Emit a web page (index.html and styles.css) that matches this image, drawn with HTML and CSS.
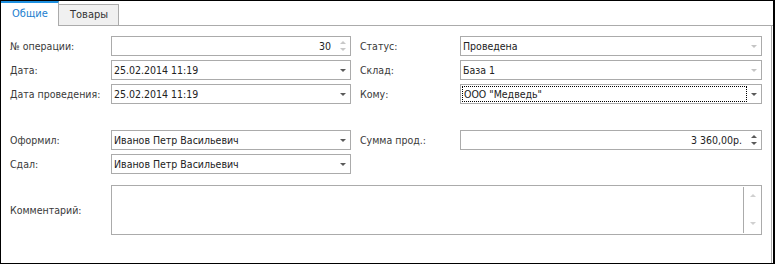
FILE: index.html
```html
<!DOCTYPE html>
<html lang="ru">
<head>
  <meta charset="UTF-8" />
  <title>Операция</title>
  <link rel="stylesheet" href="styles.css">
</head>
<body>

<div class="window">
  <div class="tabs">
    <div class="tab active">Общие</div>
    <div class="tab">Товары</div>
    <div class="tab-fill"></div>
  </div>

  <div class="panel">
    <div class="form-grid">
      <label class="lbl">№ операции:</label>
      <div class="field num">
        <span class="val">30</span>
        <span class="spin light"><i class="up"></i><i class="down"></i></span>
      </div>
      <span></span>
      <label class="lbl">Статус:</label>
      <div class="field">
        <span class="val">Проведена</span>
        <span class="drop light"><i></i></span>
      </div>

      <label class="lbl">Дата:</label>
      <div class="field">
        <span class="val">25.02.2014 11:19</span>
        <span class="drop"><i></i></span>
      </div>
      <span></span>
      <label class="lbl">Склад:</label>
      <div class="field">
        <span class="val">База 1</span>
        <span class="drop light"><i></i></span>
      </div>

      <label class="lbl">Дата проведения:</label>
      <div class="field">
        <span class="val">25.02.2014 11:19</span>
        <span class="drop"><i></i></span>
      </div>
      <span></span>
      <label class="lbl">Кому:</label>
      <div class="field focused">
        <span class="val">ООО "Медведь"</span>
        <span class="drop"><i></i></span>
      </div>
    </div>

    <div class="form-grid second">
      <label class="lbl">Оформил:</label>
      <div class="field">
        <span class="val">Иванов Петр Васильевич</span>
        <span class="drop"><i></i></span>
      </div>
      <span></span>
      <label class="lbl">Сумма прод.:</label>
      <div class="field num">
        <span class="val">3 360,00р.</span>
        <span class="spin"><i class="up"></i><i class="down"></i></span>
      </div>

      <label class="lbl">Сдал:</label>
      <div class="field">
        <span class="val">Иванов Петр Васильевич</span>
        <span class="drop"><i></i></span>
      </div>
    </div>

    <div class="form-grid comment-row">
      <label class="lbl">Комментарий:</label>
      <div class="memo">
        <div class="memo-text"></div>
        <div class="memo-scroll">
          <i class="up"></i>
          <i class="down"></i>
        </div>
      </div>
    </div>
  </div>
</div>

</body>
</html>
```

FILE: styles.css
```css
* {
  margin: 0;
  padding: 0;
  box-sizing: border-box;
}

body {
  font-family: "DejaVu Sans Condensed", "DejaVu Sans", Verdana, sans-serif;
  font-stretch: semi-condensed;
  font-size: 10.5px;
  background: #fff;
  color: #222;
}

.window {
  width: 775px;
  height: 264px;
  border: 1px solid #000;
  border-right-width: 2px;
  display: flex;
  flex-direction: column;
  background: #fff;
}

/* onglets */
.tabs {
  display: flex;
  height: 25px;
  flex-shrink: 0;
}

.tab {
  padding: 0 11px;
  line-height: 20px;
  color: #333;
  background: #f0f0f0;
  border-top: 1px solid #ababab;
  border-right: 1px solid #ababab;
  border-bottom: 1px solid #ababab;
  margin-top: 3px;
  width: 60px;
  font-size: 11px;
}

.tab.active {
  width: 58px;
  margin-top: 0;
  background: #fff;
  color: #1c80cf;
  border-top: 2px solid #1e90e0;
  border-bottom: none;
  line-height: 22px;
}

.tab-fill {
  flex: 1;
  border-bottom: 1px solid #ababab;
}

.panel {
  flex: 1;
  border-right: 1px solid #ababab;
  margin-right: 1px;
  padding: 10px 0 0 9px;
}

.form-grid {
  display: grid;
  grid-template-columns: 101px 240px 9px 100px 302px;
  grid-auto-rows: 20px;
  row-gap: 4px;
  align-items: center;
}

.form-grid.second {
  margin-top: 26px;
}

.form-grid.comment-row {
  margin-top: 11px;
  grid-auto-rows: 50px;
}

.lbl {
  color: #3a3a3a;
  white-space: nowrap;
}

.field {
  height: 20px;
  border: 1px solid #ababab;
  display: flex;
  align-items: center;
  background: #fff;
}

.val {
  flex: 1;
  padding-left: 2px;
  white-space: nowrap;
  overflow: hidden;
}

.num .val {
  text-align: right;
  padding-right: 5px;
}

.focused .val {
  margin: 1px 0 1px 1px;
  height: 16px;
  line-height: 14px;
  border: 1px dotted #000;
  padding-left: 1px;
}

.drop {
  width: 14px;
  display: flex;
  justify-content: center;
}

.drop i {
  width: 0;
  height: 0;
  border-left: 3px solid transparent;
  border-right: 3px solid transparent;
  border-top: 3px solid #5a5a5a;
}

.drop.light i {
  border-top-color: #c4c4c4;
}

.spin {
  width: 14px;
  display: flex;
  flex-direction: column;
  align-items: center;
  gap: 4px;
}

.spin i,
.memo-scroll i {
  width: 0;
  height: 0;
  border-left: 3px solid transparent;
  border-right: 3px solid transparent;
}

.spin .up {
  border-bottom: 3px solid #5a5a5a;
}

.spin .down {
  border-top: 3px solid #5a5a5a;
}

.spin.light .up {
  border-bottom-color: #c8c8c8;
}

.spin.light .down {
  border-top-color: #c8c8c8;
}

.memo {
  grid-column: 2 / 6;
  height: 50px;
  border: 1px solid #ababab;
  display: flex;
}

.memo-text {
  flex: 1;
}

.memo-scroll {
  width: 18px;
  margin: 1px 0;
  border-left: 1px solid #ababab;
  display: flex;
  flex-direction: column;
  align-items: center;
  justify-content: space-between;
  padding: 7px 0 8px;
}

.memo-scroll .up {
  border-bottom: 3px solid #d0d0d0;
}

.memo-scroll .down {
  border-top: 3px solid #d0d0d0;
}
```
